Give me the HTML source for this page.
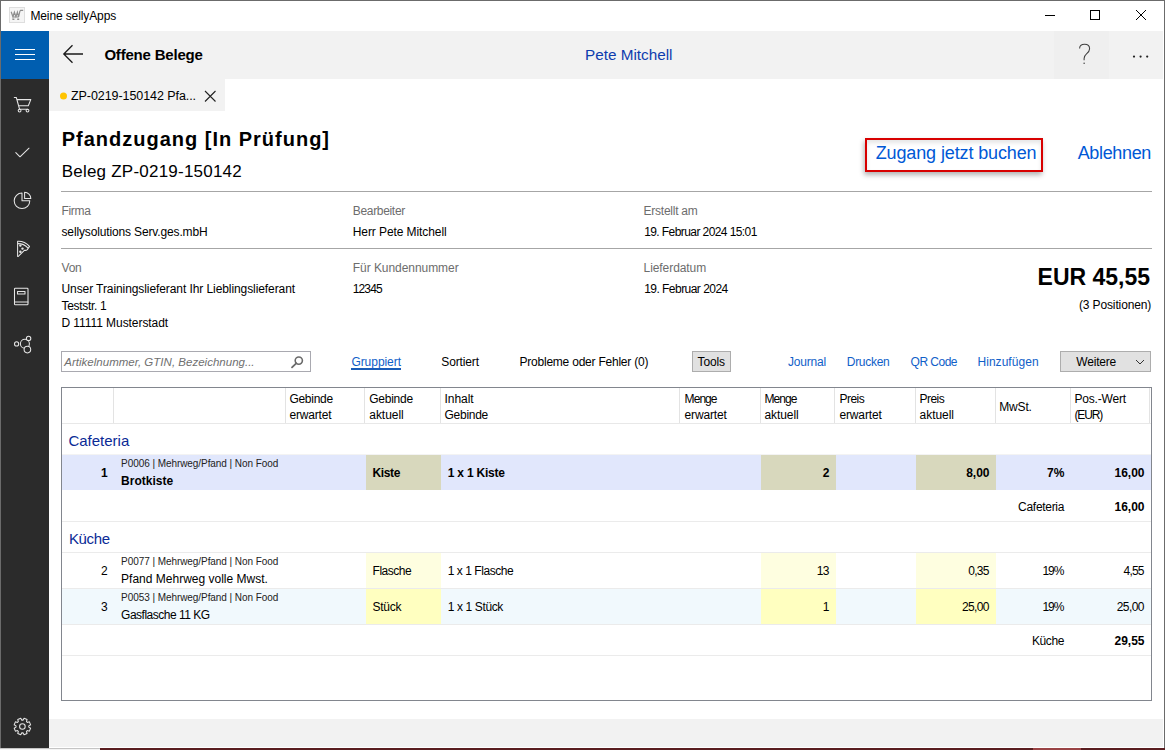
<!DOCTYPE html>
<html><head><meta charset="utf-8"><style>
html,body{margin:0;padding:0;}
body{width:1165px;height:750px;overflow:hidden;position:relative;background:#fff;font-family:"Liberation Sans", sans-serif;}
</style></head><body>
<div style='position:absolute;left:0px;top:0px;width:1165px;height:750px;background:#fff'></div>
<div style='position:absolute;left:0px;top:0px;width:1165px;height:1px;background:#6b6b6b'></div>
<div style='position:absolute;left:0px;top:0px;width:1px;height:748px;background:#6b6b6b'></div>
<div style='position:absolute;left:1164px;top:0px;width:1px;height:748px;background:#6b6b6b'></div>
<div style='position:absolute;left:0px;top:748px;width:100px;height:1px;background:#c4c4c4'></div>
<div style='position:absolute;left:0px;top:749px;width:100px;height:1px;background:#f4f4f4'></div>
<div style='position:absolute;left:100px;top:748px;width:1065px;height:2px;background:#5a1e21'></div>
<div style='position:absolute;left:1033px;top:748px;width:48px;height:2px;background:#9a4446'></div>
<div style='position:absolute;left:1px;top:31px;width:48px;height:48px;background:#005eb0'></div>
<div style='position:absolute;left:1px;top:79px;width:48px;height:669px;background:#2b2b2b'></div>
<div style='position:absolute;left:15px;top:49px;width:20px;height:1px;background:#fff'></div>
<div style='position:absolute;left:15px;top:54px;width:20px;height:1px;background:#fff'></div>
<div style='position:absolute;left:15px;top:59px;width:20px;height:1px;background:#fff'></div>
<div style='position:absolute;left:49px;top:31px;width:1114px;height:48px;background:#f2f2f2'></div>
<div style='position:absolute;left:1054px;top:31px;width:55px;height:48px;background:#efefef'></div>
<div style='position:absolute;left:49px;top:79px;width:176px;height:32px;background:#f2f2f2'></div>
<div style='position:absolute;left:865px;top:138px;width:178px;height:34px;border:2px solid #d80000;box-sizing:border-box;box-shadow:-1px 3px 5px rgba(0,0,0,.30), inset 0 3px 4px rgba(0,0,0,.10)'></div>
<div style='position:absolute;left:61px;top:191px;width:1091px;height:1px;background:#a6a6a6'></div>
<div style='position:absolute;left:61px;top:248px;width:1091px;height:1px;background:#a6a6a6'></div>
<div style='position:absolute;left:61px;top:351px;width:250px;height:21px;border:1px solid #a9a9b0;box-sizing:border-box;background:#fff'></div>
<div style='position:absolute;left:351px;top:368px;width:50px;height:2px;background:#1a5cb8'></div>
<div style='position:absolute;left:692px;top:351px;width:39px;height:21px;background:#e1e1e1;border:1px solid #adadad;box-sizing:border-box'></div>
<div style='position:absolute;left:1060px;top:351px;width:91px;height:21px;background:#e1e1e1;border:1px solid #adadad;box-sizing:border-box'></div>
<div style='position:absolute;left:61px;top:387px;width:1091px;height:314px;border:1px solid #82868e;box-sizing:border-box'></div>
<div style='position:absolute;left:62px;top:423px;width:1089px;height:1px;background:#e8e8e8'></div>
<div style='position:absolute;left:113px;top:388px;width:1px;height:35px;background:#e3e3e3'></div>
<div style='position:absolute;left:285px;top:388px;width:1px;height:35px;background:#e3e3e3'></div>
<div style='position:absolute;left:364px;top:388px;width:1px;height:35px;background:#e3e3e3'></div>
<div style='position:absolute;left:440px;top:388px;width:1px;height:35px;background:#e3e3e3'></div>
<div style='position:absolute;left:679px;top:388px;width:1px;height:35px;background:#e3e3e3'></div>
<div style='position:absolute;left:760px;top:388px;width:1px;height:35px;background:#e3e3e3'></div>
<div style='position:absolute;left:834px;top:388px;width:1px;height:35px;background:#e3e3e3'></div>
<div style='position:absolute;left:915px;top:388px;width:1px;height:35px;background:#e3e3e3'></div>
<div style='position:absolute;left:995px;top:388px;width:1px;height:35px;background:#e3e3e3'></div>
<div style='position:absolute;left:1070px;top:388px;width:1px;height:35px;background:#e3e3e3'></div>
<div style='position:absolute;left:1149px;top:388px;width:1px;height:35px;background:#e3e3e3'></div>
<div style='position:absolute;left:62px;top:454px;width:1089px;height:1px;background:#f3f3f3'></div>
<div style='position:absolute;left:62px;top:455px;width:1089px;height:35px;background:#e1e7fc'></div>
<div style='position:absolute;left:366px;top:455px;width:75px;height:35px;background:#d8d8bd'></div>
<div style='position:absolute;left:761px;top:455px;width:75px;height:35px;background:#d8d8bd'></div>
<div style='position:absolute;left:916px;top:455px;width:80px;height:35px;background:#d8d8bd'></div>
<div style='position:absolute;left:62px;top:521px;width:1089px;height:1px;background:#ebebeb'></div>
<div style='position:absolute;left:62px;top:552px;width:1089px;height:1px;background:#ebebeb'></div>
<div style='position:absolute;left:366px;top:553px;width:75px;height:35px;background:#fefee0'></div>
<div style='position:absolute;left:761px;top:553px;width:75px;height:35px;background:#fefee0'></div>
<div style='position:absolute;left:916px;top:553px;width:80px;height:35px;background:#fefee0'></div>
<div style='position:absolute;left:62px;top:588px;width:1089px;height:1px;background:#ebebeb'></div>
<div style='position:absolute;left:62px;top:589px;width:1089px;height:35px;background:#f1f9fd'></div>
<div style='position:absolute;left:366px;top:589px;width:75px;height:35px;background:#ffffc0'></div>
<div style='position:absolute;left:761px;top:589px;width:75px;height:35px;background:#ffffc0'></div>
<div style='position:absolute;left:916px;top:589px;width:80px;height:35px;background:#ffffc0'></div>
<div style='position:absolute;left:62px;top:624px;width:1089px;height:1px;background:#ebebeb'></div>
<div style='position:absolute;left:62px;top:655px;width:1089px;height:1px;background:#ebebeb'></div>
<div style='position:absolute;left:49px;top:719px;width:1114px;height:28px;background:#f2f2f2'></div>
<svg style='position:absolute;left:0;top:0' width='1165' height='31'>
<rect x='9.5' y='7.5' width='15' height='15' fill='#f5f5f5' stroke='#dedede'/>
<path d='M11.2 11.8L12.9 16.8L14.4 12.2L15.9 16.6L17.4 12.2L18.6 16.8L19.9 11.2L20.6 10.4H23.2M12.6 17H18.8' fill='none' stroke='#8e8e8e' stroke-width='1.2'/>
<path d='M12.4 19.3H14.4M17.2 19.3H19.2' stroke='#8e8e8e' stroke-width='1.4'/>
<path d='M1045 15.5h10' stroke='#000' stroke-width='1'/>
<rect x='1090.5' y='10.5' width='9' height='9' fill='none' stroke='#000' stroke-width='1'/>
<path d='M1136 10l10 10M1146 10l-10 10' stroke='#000' stroke-width='1'/>
</svg>
<svg style='position:absolute;left:0;top:0' width='49' height='748' fill='none' stroke='#e6e6e6' stroke-width='1.05' stroke-linecap='round' stroke-linejoin='round'>
<path d='M14.3 97.5H16.3L19.6 109.3H27.6M17 99.6H30.8L28.3 105.8H18.8'/>
<circle cx='19.6' cy='110.6' r='1.4'/><circle cx='27.5' cy='110.6' r='1.4'/>
<path d='M15.8 152.6L20 156.8L29 148.2'/>
<path d='M22 193A7.8 7.8 0 1 0 29.8 200.8H22Z'/>
<path d='M24.6 192.3V198.5H30.8A6.2 6.2 0 0 0 24.6 192.3Z'/>
<path d='M17.6 241.2Q24.5 240.8 29.5 246.4L27.3 249.6Q25.8 250.8 24.6 250.2L18.2 256.5Q17.6 256.8 17.6 256V241.2Z'/>
<path d='M18.2 243.6Q23.8 243.6 27.8 247.8'/>
<circle cx='20.4' cy='245.6' r='0.7' fill='#e6e6e6'/><circle cx='22.5' cy='248.6' r='0.7' fill='#e6e6e6'/><circle cx='20.4' cy='251.7' r='0.7' fill='#e6e6e6'/>
<rect x='14.5' y='288.2' width='13.5' height='16.5' rx='0.8'/>
<path d='M14.5 302H28'/>
<rect x='17.5' y='291.5' width='7.5' height='2.5'/>
<circle cx='16.6' cy='343.9' r='2.1'/>
<circle cx='24.9' cy='343.7' r='4.5'/>
<circle cx='28.6' cy='338.4' r='2.2' fill='#2b2b2b'/>
<circle cx='27.4' cy='349.6' r='3.3' fill='#2b2b2b'/>
<circle cx='22.4' cy='726.5' r='2.8'/>
</svg>
<svg style='position:absolute;left:0;top:0' width='49' height='748'><path d='M23.01 720.13 L24.07 718.27 L27.04 719.50 L26.47 721.56 L27.34 722.43 L27.34 722.43 L29.40 721.86 L30.63 724.83 L28.77 725.89 L28.77 727.11 L28.77 727.11 L30.63 728.17 L29.40 731.14 L27.34 730.57 L26.47 731.44 L26.47 731.44 L27.04 733.50 L24.07 734.73 L23.01 732.87 L21.79 732.87 L21.79 732.87 L20.73 734.73 L17.76 733.50 L18.33 731.44 L17.46 730.57 L17.46 730.57 L15.40 731.14 L14.17 728.17 L16.03 727.11 L16.03 725.89 L16.03 725.89 L14.17 724.83 L15.40 721.86 L17.46 722.43 L18.33 721.56 L18.33 721.56 L17.76 719.50 L20.73 718.27 L21.79 720.13 L23.01 720.13Z' fill='none' stroke='#e6e6e6' stroke-width='1.05' stroke-linejoin='round'/></svg>
<svg style='position:absolute;left:0;top:0' width='1165' height='80' fill='none'>
<path d='M83 54H64M72.5 45.3L63.8 54L72.5 62.7' stroke='#1a1a1a' stroke-width='1.3'/>
<path d='M1079.6 48.5Q1079.6 44.3 1084.6 44.3Q1089.6 44.3 1089.6 48.7Q1089.6 51.3 1086.5 53.8Q1084.1 55.8 1084.1 58.6V60.2' stroke='#404040' stroke-width='1.05'/>
<circle cx='1084.1' cy='63.2' r='0.75' fill='#404040'/>
<circle cx='1134' cy='56.6' r='1.1' fill='#222'/><circle cx='1140.6' cy='56.6' r='1.1' fill='#222'/><circle cx='1147.2' cy='56.6' r='1.1' fill='#222'/>
</svg>
<svg style='position:absolute;left:0;top:79' width='230' height='32' fill='none'>
<circle cx='63.5' cy='17' r='3.5' fill='#ffc400'/>
<path d='M205 12L215.5 22.5M215.5 12L205 22.5' stroke='#222' stroke-width='1.1'/>
</svg>
<svg style='position:absolute;left:0;top:0' width='1165' height='380' fill='none'>
<circle cx='298.8' cy='360.6' r='3.6' stroke='#6a6a6a' stroke-width='1.6'/>
<path d='M296.2 363.3L292 367.4' stroke='#6a6a6a' stroke-width='1.8' stroke-linecap='round'/>
<path d='M1136 360L1140 364L1144 360' stroke='#333' stroke-width='1'/>
</svg>
<div style='position:absolute;top:10px;white-space:nowrap;font-size:12px;line-height:12px;color:#000;letter-spacing:-0.112px;left:30.40px;'>Meine sellyApps</div>
<div style='position:absolute;top:47px;white-space:nowrap;font-size:15px;line-height:15px;color:#000;font-weight:700;letter-spacing:-0.198px;left:104.40px;'>Offene Belege</div>
<div style='position:absolute;top:47px;white-space:nowrap;font-size:15.3px;line-height:15.3px;color:#0e3cae;letter-spacing:-0.006px;left:585.00px;'>Pete Mitchell</div>
<div style='position:absolute;top:90px;white-space:nowrap;font-size:12.5px;line-height:12.5px;color:#000;letter-spacing:-0.071px;left:71.00px;'>ZP-0219-150142 Pfa...</div>
<div style='position:absolute;top:129px;white-space:nowrap;font-size:20px;line-height:20px;color:#000;font-weight:700;letter-spacing:0.996px;left:61.70px;'>Pfandzugang [In Prüfung]</div>
<div style='position:absolute;top:163px;white-space:nowrap;font-size:17px;line-height:17px;color:#000;letter-spacing:0.225px;left:61.70px;'>Beleg ZP-0219-150142</div>
<div style='position:absolute;top:144px;white-space:nowrap;font-size:18px;line-height:18px;color:#0058d6;letter-spacing:-0.122px;left:875.70px;'>Zugang jetzt buchen</div>
<div style='position:absolute;top:144px;white-space:nowrap;font-size:18px;line-height:18px;color:#0058d6;letter-spacing:-0.347px;left:1077.70px;'>Ablehnen</div>
<div style='position:absolute;top:205px;white-space:nowrap;font-size:12px;line-height:12px;color:#6d6d6d;letter-spacing:-0.314px;left:61.50px;'>Firma</div>
<div style='position:absolute;top:205px;white-space:nowrap;font-size:12px;line-height:12px;color:#6d6d6d;letter-spacing:-0.327px;left:352.80px;'>Bearbeiter</div>
<div style='position:absolute;top:205px;white-space:nowrap;font-size:12px;line-height:12px;color:#6d6d6d;letter-spacing:-0.253px;left:643.60px;'>Erstellt am</div>
<div style='position:absolute;top:226px;white-space:nowrap;font-size:12px;line-height:12px;color:#000;letter-spacing:-0.142px;left:61.50px;'>sellysolutions Serv.ges.mbH</div>
<div style='position:absolute;top:226px;white-space:nowrap;font-size:12px;line-height:12px;color:#000;letter-spacing:-0.088px;left:352.80px;'>Herr Pete Mitchell</div>
<div style='position:absolute;top:226px;white-space:nowrap;font-size:12px;line-height:12px;color:#000;letter-spacing:-0.584px;left:644.20px;'>19. Februar 2024 15:01</div>
<div style='position:absolute;top:262px;white-space:nowrap;font-size:12px;line-height:12px;color:#6d6d6d;letter-spacing:-0.201px;left:61.50px;'>Von</div>
<div style='position:absolute;top:262px;white-space:nowrap;font-size:12px;line-height:12px;color:#6d6d6d;letter-spacing:-0.057px;left:352.80px;'>Für Kundennummer</div>
<div style='position:absolute;top:262px;white-space:nowrap;font-size:12px;line-height:12px;color:#6d6d6d;letter-spacing:-0.080px;left:643.60px;'>Lieferdatum</div>
<div style='position:absolute;top:283px;white-space:nowrap;font-size:12px;line-height:12px;color:#000;letter-spacing:-0.084px;left:61.50px;'>Unser Trainingslieferant Ihr Lieblingslieferant</div>
<div style='position:absolute;top:283px;white-space:nowrap;font-size:12px;line-height:12px;color:#000;letter-spacing:-0.895px;left:352.80px;'>12345</div>
<div style='position:absolute;top:283px;white-space:nowrap;font-size:12px;line-height:12px;color:#000;letter-spacing:-0.535px;left:644.20px;'>19. Februar 2024</div>
<div style='position:absolute;top:300px;white-space:nowrap;font-size:12px;line-height:12px;color:#000;letter-spacing:-0.323px;left:61.50px;'>Teststr. 1</div>
<div style='position:absolute;top:317px;white-space:nowrap;font-size:12px;line-height:12px;color:#000;letter-spacing:-0.065px;left:61.50px;'>D 11111 Musterstadt</div>
<div style='position:absolute;top:266px;white-space:nowrap;font-size:23px;line-height:23px;color:#000;font-weight:700;letter-spacing:0.009px;right:14.89px;'>EUR 45,55</div>
<div style='position:absolute;top:299px;white-space:nowrap;font-size:12px;line-height:12px;color:#000;letter-spacing:-0.132px;right:13.83px;'>(3 Positionen)</div>
<div style='position:absolute;top:357px;white-space:nowrap;font-size:11.5px;line-height:11.5px;color:#707070;font-style:italic;letter-spacing:0.013px;left:64.30px;'>Artikelnummer, GTIN, Bezeichnung...</div>
<div style='position:absolute;top:356px;white-space:nowrap;font-size:12px;line-height:12px;color:#1060c8;letter-spacing:-0.048px;left:351.40px;'>Gruppiert</div>
<div style='position:absolute;top:356px;white-space:nowrap;font-size:12px;line-height:12px;color:#000;letter-spacing:-0.136px;left:441.30px;'>Sortiert</div>
<div style='position:absolute;top:356px;white-space:nowrap;font-size:12px;line-height:12px;color:#000;letter-spacing:-0.223px;left:519.50px;'>Probleme oder Fehler (0)</div>
<div style='position:absolute;top:356px;white-space:nowrap;font-size:12px;line-height:12px;color:#000;letter-spacing:-0.163px;left:697.60px;'>Tools</div>
<div style='position:absolute;top:356px;white-space:nowrap;font-size:12px;line-height:12px;color:#1060c8;letter-spacing:-0.208px;left:788.00px;'>Journal</div>
<div style='position:absolute;top:356px;white-space:nowrap;font-size:12px;line-height:12px;color:#1060c8;letter-spacing:-0.298px;left:846.80px;'>Drucken</div>
<div style='position:absolute;top:356px;white-space:nowrap;font-size:12px;line-height:12px;color:#1060c8;letter-spacing:-0.519px;left:910.60px;'>QR Code</div>
<div style='position:absolute;top:356px;white-space:nowrap;font-size:12px;line-height:12px;color:#1060c8;letter-spacing:0.038px;left:977.50px;'>Hinzufügen</div>
<div style='position:absolute;top:356px;white-space:nowrap;font-size:12px;line-height:12px;color:#000;letter-spacing:-0.206px;left:1076.30px;'>Weitere</div>
<div style='position:absolute;top:393px;white-space:nowrap;font-size:12px;line-height:12px;color:#000;letter-spacing:-0.268px;left:289.40px;'>Gebinde</div>
<div style='position:absolute;top:409px;white-space:nowrap;font-size:12px;line-height:12px;color:#000;letter-spacing:-0.157px;left:289.40px;'>erwartet</div>
<div style='position:absolute;top:393px;white-space:nowrap;font-size:12px;line-height:12px;color:#000;letter-spacing:-0.268px;left:369.30px;'>Gebinde</div>
<div style='position:absolute;top:409px;white-space:nowrap;font-size:12px;line-height:12px;color:#000;letter-spacing:-0.055px;left:369.30px;'>aktuell</div>
<div style='position:absolute;top:393px;white-space:nowrap;font-size:12px;line-height:12px;color:#000;letter-spacing:-0.043px;left:444.50px;'>Inhalt</div>
<div style='position:absolute;top:409px;white-space:nowrap;font-size:12px;line-height:12px;color:#000;letter-spacing:-0.268px;left:444.50px;'>Gebinde</div>
<div style='position:absolute;top:393px;white-space:nowrap;font-size:12px;line-height:12px;color:#000;letter-spacing:-0.941px;left:684.60px;'>Menge</div>
<div style='position:absolute;top:409px;white-space:nowrap;font-size:12px;line-height:12px;color:#000;letter-spacing:-0.157px;left:684.60px;'>erwartet</div>
<div style='position:absolute;top:393px;white-space:nowrap;font-size:12px;line-height:12px;color:#000;letter-spacing:-0.941px;left:764.40px;'>Menge</div>
<div style='position:absolute;top:409px;white-space:nowrap;font-size:12px;line-height:12px;color:#000;letter-spacing:-0.055px;left:764.40px;'>aktuell</div>
<div style='position:absolute;top:393px;white-space:nowrap;font-size:12px;line-height:12px;color:#000;letter-spacing:-0.549px;left:839.50px;'>Preis</div>
<div style='position:absolute;top:409px;white-space:nowrap;font-size:12px;line-height:12px;color:#000;letter-spacing:-0.157px;left:839.50px;'>erwartet</div>
<div style='position:absolute;top:393px;white-space:nowrap;font-size:12px;line-height:12px;color:#000;letter-spacing:-0.549px;left:919.60px;'>Preis</div>
<div style='position:absolute;top:409px;white-space:nowrap;font-size:12px;line-height:12px;color:#000;letter-spacing:-0.055px;left:919.60px;'>aktuell</div>
<div style='position:absolute;top:393px;white-space:nowrap;font-size:12px;line-height:12px;color:#000;letter-spacing:-0.192px;left:1074.50px;'>Pos.-Wert</div>
<div style='position:absolute;top:409px;white-space:nowrap;font-size:12px;line-height:12px;color:#000;letter-spacing:-1.166px;left:1074.50px;'>(EUR)</div>
<div style='position:absolute;top:401px;white-space:nowrap;font-size:12px;line-height:12px;color:#000;letter-spacing:-0.189px;left:999.30px;'>MwSt.</div>
<div style='position:absolute;top:433px;white-space:nowrap;font-size:15px;line-height:15px;color:#0a2a96;left:68.40px;'>Cafeteria</div>
<div style='position:absolute;top:467px;white-space:nowrap;font-size:12px;line-height:12px;color:#000;font-weight:700;right:1057.40px;'>1</div>
<div style='position:absolute;top:459px;white-space:nowrap;font-size:10px;line-height:10px;color:#222;letter-spacing:-0.065px;left:121.10px;'>P0006 | Mehrweg/Pfand | Non Food</div>
<div style='position:absolute;top:475px;white-space:nowrap;font-size:12px;line-height:12px;color:#000;font-weight:700;left:121.10px;'>Brotkiste</div>
<div style='position:absolute;top:467px;white-space:nowrap;font-size:12px;line-height:12px;color:#000;font-weight:700;letter-spacing:-0.389px;left:372.60px;'>Kiste</div>
<div style='position:absolute;top:467px;white-space:nowrap;font-size:12px;line-height:12px;color:#000;font-weight:700;letter-spacing:-0.207px;left:447.70px;'>1 x 1 Kiste</div>
<div style='position:absolute;top:467px;white-space:nowrap;font-size:12px;line-height:12px;color:#000;font-weight:700;right:335.60px;'>2</div>
<div style='position:absolute;top:467px;white-space:nowrap;font-size:12px;line-height:12px;color:#000;font-weight:700;right:175.50px;'>8,00</div>
<div style='position:absolute;top:467px;white-space:nowrap;font-size:12px;line-height:12px;color:#000;font-weight:700;right:100.60px;'>7%</div>
<div style='position:absolute;top:467px;white-space:nowrap;font-size:12px;line-height:12px;color:#000;font-weight:700;right:20.50px;'>16,00</div>
<div style='position:absolute;top:501px;white-space:nowrap;font-size:12px;line-height:12px;color:#000;letter-spacing:-0.300px;right:100.90px;'>Cafeteria</div>
<div style='position:absolute;top:501px;white-space:nowrap;font-size:12px;line-height:12px;color:#000;font-weight:700;right:20.50px;'>16,00</div>
<div style='position:absolute;top:531px;white-space:nowrap;font-size:15px;line-height:15px;color:#0a2a96;letter-spacing:-0.349px;left:68.90px;'>Küche</div>
<div style='position:absolute;top:565px;white-space:nowrap;font-size:12px;line-height:12px;color:#000;right:1057.40px;'>2</div>
<div style='position:absolute;top:557px;white-space:nowrap;font-size:10px;line-height:10px;color:#222;letter-spacing:-0.065px;left:121.10px;'>P0077 | Mehrweg/Pfand | Non Food</div>
<div style='position:absolute;top:573px;white-space:nowrap;font-size:12px;line-height:12px;color:#000;left:121.10px;'>Pfand Mehrweg volle Mwst.</div>
<div style='position:absolute;top:565px;white-space:nowrap;font-size:12px;line-height:12px;color:#000;letter-spacing:-0.490px;left:372.60px;'>Flasche</div>
<div style='position:absolute;top:565px;white-space:nowrap;font-size:12px;line-height:12px;color:#000;letter-spacing:-0.452px;left:447.70px;'>1 x 1 Flasche</div>
<div style='position:absolute;top:565px;white-space:nowrap;font-size:12px;line-height:12px;color:#000;letter-spacing:-0.730px;right:336.33px;'>13</div>
<div style='position:absolute;top:565px;white-space:nowrap;font-size:12px;line-height:12px;color:#000;letter-spacing:-0.690px;right:176.19px;'>0,35</div>
<div style='position:absolute;top:565px;white-space:nowrap;font-size:12px;line-height:12px;color:#000;letter-spacing:-1.010px;right:101.61px;'>19%</div>
<div style='position:absolute;top:565px;white-space:nowrap;font-size:12px;line-height:12px;color:#000;letter-spacing:-0.790px;right:21.29px;'>4,55</div>
<div style='position:absolute;top:601px;white-space:nowrap;font-size:12px;line-height:12px;color:#000;right:1057.40px;'>3</div>
<div style='position:absolute;top:593px;white-space:nowrap;font-size:10px;line-height:10px;color:#222;letter-spacing:-0.065px;left:121.10px;'>P0053 | Mehrweg/Pfand | Non Food</div>
<div style='position:absolute;top:609px;white-space:nowrap;font-size:12px;line-height:12px;color:#000;letter-spacing:-0.500px;left:121.10px;'>Gasflasche 11 KG</div>
<div style='position:absolute;top:601px;white-space:nowrap;font-size:12px;line-height:12px;color:#000;letter-spacing:-0.303px;left:372.60px;'>Stück</div>
<div style='position:absolute;top:601px;white-space:nowrap;font-size:12px;line-height:12px;color:#000;letter-spacing:-0.370px;left:447.70px;'>1 x 1 Stück</div>
<div style='position:absolute;top:601px;white-space:nowrap;font-size:12px;line-height:12px;color:#000;right:335.60px;'>1</div>
<div style='position:absolute;top:601px;white-space:nowrap;font-size:12px;line-height:12px;color:#000;letter-spacing:-0.626px;right:176.13px;'>25,00</div>
<div style='position:absolute;top:601px;white-space:nowrap;font-size:12px;line-height:12px;color:#000;letter-spacing:-1.010px;right:101.61px;'>19%</div>
<div style='position:absolute;top:601px;white-space:nowrap;font-size:12px;line-height:12px;color:#000;letter-spacing:-0.546px;right:21.05px;'>25,00</div>
<div style='position:absolute;top:635px;white-space:nowrap;font-size:12px;line-height:12px;color:#000;letter-spacing:-0.386px;right:100.99px;'>Küche</div>
<div style='position:absolute;top:635px;white-space:nowrap;font-size:12px;line-height:12px;color:#000;font-weight:700;right:20.50px;'>29,55</div>
</body></html>
